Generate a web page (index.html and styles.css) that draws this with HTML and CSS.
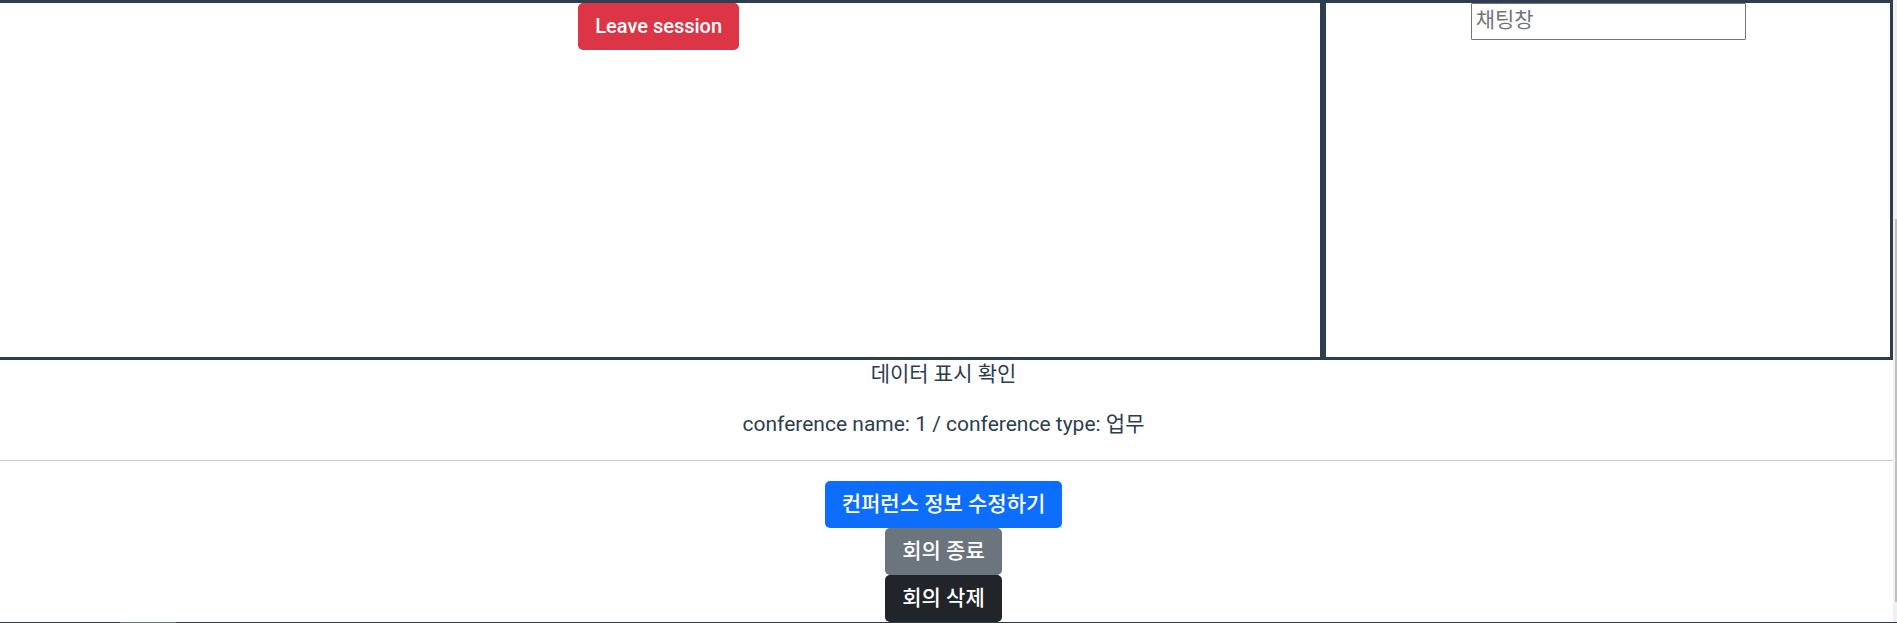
FILE: index.html
```html
<!DOCTYPE html>
<html lang="ko">
<head>
<meta charset="utf-8">
<title>Conference</title>
<link rel="stylesheet" href="styles.css">
</head>
<body>
<div class="window">
  <main class="page">
    <div class="room">
      <section class="panel panel-video">
        <button class="btn btn-danger" type="button">Leave session</button>
      </section>
      <section class="panel panel-chat">
        <input class="chat-input" type="text" placeholder="채팅창" aria-label="채팅창">
      </section>
    </div>
    <p class="text">데이터 표시 확인</p>
    <p class="text">conference name: 1 / conference type: 업무</p>
    <hr class="divider">
    <div class="actions">
      <button class="btn btn-primary" type="button">컨퍼런스 정보 수정하기</button>
      <button class="btn btn-secondary" type="button">회의 종료</button>
      <button class="btn btn-dark" type="button">회의 삭제</button>
    </div>
  </main>
  <div class="scrollbar"><div class="thumb"></div></div>
</div>
<footer class="taskbar"><div class="taskbar-item"></div></footer>
</body>
</html>
```
FILE: styles.css
```css
* {
  box-sizing: border-box;
}

body {
  margin: 0;
  height: 100vh;
  display: flex;
  flex-direction: column;
  overflow: hidden;
  background: #fff;
  color: #2c3e50;
  font-family: Roboto, "Noto Sans CJK KR", sans-serif;
  font-size: 21px;
  font-weight: 400;
  line-height: 31px;
}

.window {
  flex: 1;
  min-height: 0;
  display: flex;
}

.page {
  flex: 1;
  margin-left: -6px;
  text-align: center;
}

.room {
  display: grid;
  grid-template-columns: 7fr 3fr;
  min-height: 360px;
}

.panel {
  display: flex;
  justify-content: center;
  align-items: flex-start;
  border: 3px solid #2c3e50;
}

.btn {
  padding: 7px 16px;
  border: 1px solid transparent;
  border-radius: 5px;
  color: #fff;
  font: inherit;
  font-weight: 500;
}

.btn-danger {
  background: #dc3545;
  font-size: 20px;
}

.btn-primary {
  background: #0d6efd;
}

.btn-secondary {
  background: #6c757d;
}

.btn-dark {
  background: #212529;
}

.chat-input {
  width: 275px;
  padding: 1px 4px 3px;
  border: 1px solid #767676;
  border-radius: 1px;
  background: #fff;
  color: #2c3e50;
  font: inherit;
}

.chat-input::placeholder {
  color: #757575;
  opacity: 1;
}

.text {
  margin: 0 0 20px;
}

.text:first-of-type {
  line-height: 29px;
}

.divider {
  height: 1px;
  margin: 0 0 20px;
  border: 0;
  background: #cacbce;
}

.actions {
  display: flex;
  flex-direction: column;
  align-items: center;
}

.scrollbar {
  width: 4px;
  padding: 219px 0 20px 2px;
  background: #f1f1f1;
}

.thumb {
  height: 100%;
  background: #c1c1c1;
}

.taskbar {
  height: 1px;
  padding-left: 120px;
  background: #2f3a42;
}

.taskbar-item {
  width: 56px;
  height: 1px;
  background: #687076;
}
```
